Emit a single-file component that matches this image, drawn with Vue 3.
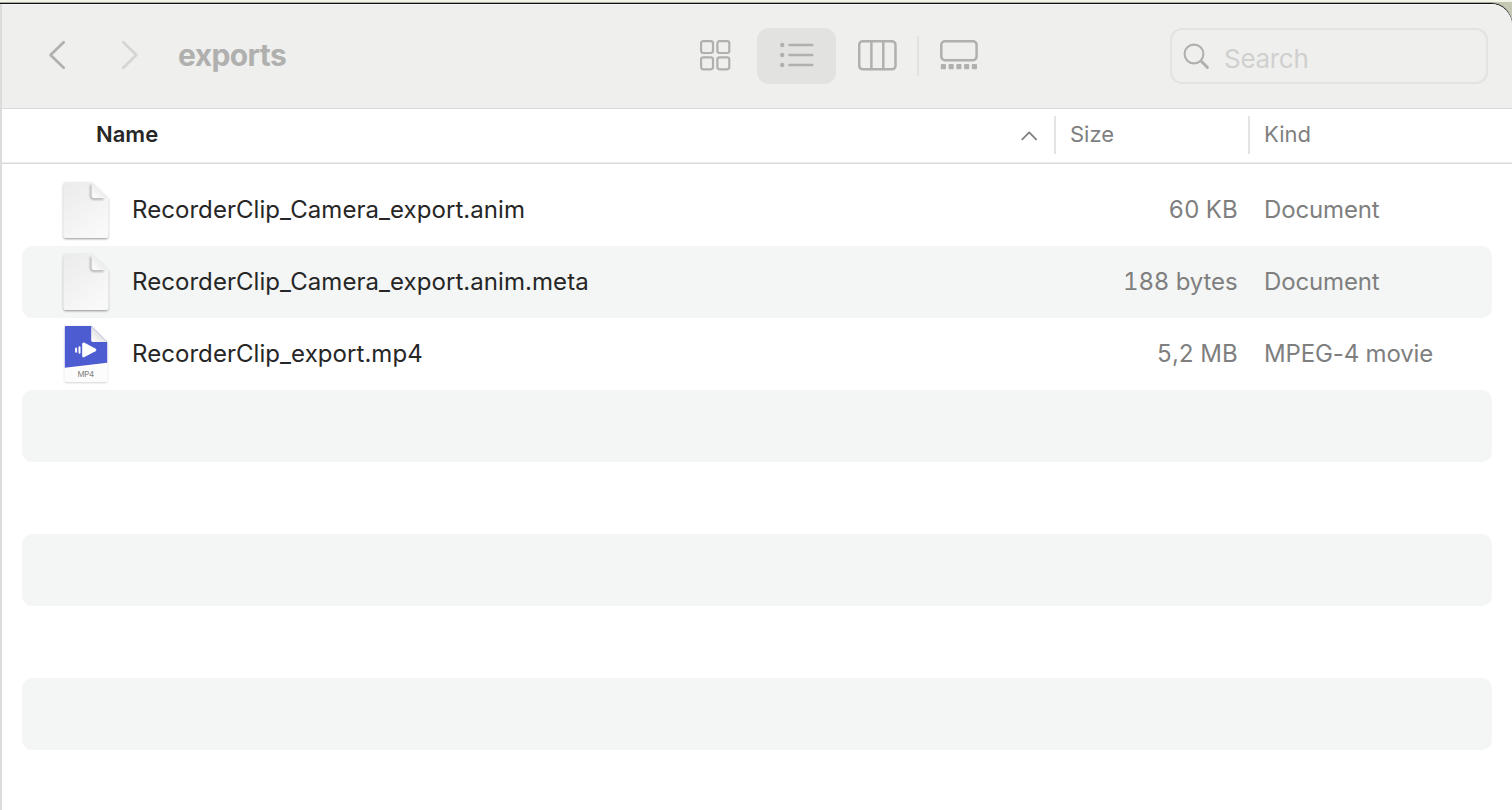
<script setup>
const files = [
  { name: 'RecorderClip_Camera_export.anim', size: '60 KB', kind: 'Document', icon: 'doc' },
  { name: 'RecorderClip_Camera_export.anim.meta', size: '188 bytes', kind: 'Document', icon: 'doc' },
  { name: 'RecorderClip_export.mp4', size: '5,2 MB', kind: 'MPEG-4 movie', icon: 'mp4' },
  ...Array.from({ length: 6 }, () => ({ name: '' })),
]
</script>

<template>
  <div class="desktop">
    <div class="window">
      <header class="toolbar">
        <nav class="nav">
          <svg width="92" height="32" viewBox="0 0 92 32" fill="none" stroke-width="2.7" stroke-linecap="round" stroke-linejoin="round">
            <path d="M17.7 3.3 4.5 16 17.7 28.7" stroke="#b0b0af" />
            <path d="M77.3 3.3 90.3 16 77.3 28.7" stroke="#d5d5d4" />
          </svg>
        </nav>
        <h1 class="title">exports</h1>
        <div class="views">
          <svg class="grid-icon" width="32" height="32" viewBox="0 0 32 32" fill="none" stroke="#b0b0af" stroke-width="2.2">
            <rect x="1.1" y="1.1" width="11.9" height="11.9" rx="2.2" />
            <rect x="17.4" y="1.1" width="11.9" height="11.9" rx="2.2" />
            <rect x="1.1" y="17.4" width="11.9" height="11.9" rx="2.2" />
            <rect x="17.4" y="17.4" width="11.9" height="11.9" rx="2.2" />
          </svg>
          <div class="active">
            <svg width="34" height="26" viewBox="0 0 34 26" stroke="#b0b0af" fill="#b0b0af" stroke-linecap="round">
              <g stroke="none"><circle cx="2.2" cy="3" r="2.2" /><circle cx="2.2" cy="13" r="2.2" /><circle cx="2.2" cy="23" r="2.2" /></g>
              <path d="M9.5 3H32.2M9.5 13H32.2M9.5 23H32.2" stroke-width="2.5" />
            </svg>
          </div>
          <svg class="cols-icon" width="40" height="32" viewBox="0 0 40 32" fill="none" stroke="#b0b0af" stroke-width="2.5">
            <rect x="1.2" y="1.3" width="36.3" height="28" rx="3.6" />
            <path d="M13.4 1.3V29.3M25.3 1.3V29.3" />
          </svg>
          <span class="sep"></span>
          <svg class="gallery-icon" width="38" height="32" viewBox="0 0 38 32" fill="none" stroke="#b0b0af" stroke-width="2.5">
            <rect x="1.3" y="1.3" width="35.3" height="18.9" rx="3.6" />
            <g fill="#b0b0af" stroke="none">
              <rect v-for="i in 5" :key="i" :x="0.8 + (i - 1) * 7.75" y="24" width="5.2" height="5.2" rx="0.9" />
            </g>
          </svg>
        </div>
        <div class="search">
          <svg width="28" height="28" viewBox="0 0 28 28" fill="none" stroke="#b0b0af" stroke-linecap="round">
            <circle cx="11" cy="11" r="9.4" stroke-width="2.1" />
            <path d="M18 18 24.4 24.4" stroke-width="2.9" />
          </svg>
          <span>Search</span>
        </div>
      </header>
      <div class="head">
        <div class="h-name"><span>Name</span>
          <svg width="16" height="10" viewBox="0 0 16 10" fill="none" stroke="#7f7f7f" stroke-width="1.8" stroke-linecap="round" stroke-linejoin="round"><path d="M1.3 8.4 8.2 1.4 15.1 8.4" /></svg>
        </div>
        <div class="h-size">Size</div>
        <div class="h-kind">Kind</div>
      </div>
      <main class="list">
        <div v-for="(f, i) in files" :key="i" class="row" :class="{ alt: i % 2 }">
          <template v-if="f.name">
            <svg v-if="f.icon === 'doc'" class="icon" width="54" height="68" viewBox="0 0 54 68">
              <defs>
                <linearGradient :id="'p' + i" x1="0" y1="0" x2="0.7" y2="1">
                  <stop offset="0" stop-color="#ebebeb" /><stop offset="1" stop-color="#f9f9f9" />
                </linearGradient>
                <linearGradient :id="'f' + i" x1="0" y1="1" x2="0.5" y2="0.5">
                  <stop offset="0" stop-color="#ffffff" /><stop offset="1" stop-color="#ededed" />
                </linearGradient>
                <filter :id="'s' + i" x="-20%" y="-20%" width="140%" height="140%"><feDropShadow dx="0" dy="1" stdDeviation="0.8" flood-color="#000" flood-opacity="0.42" /></filter>
                <filter :id="'b' + i" x="-40%" y="-40%" width="180%" height="180%"><feGaussianBlur stdDeviation="1.1" /></filter>
              </defs>
              <path d="M6 6.3H31.7L48.2 22V59.7Q48.2 62.1 45.8 62.1H6Q3.6 62.1 3.6 59.7V8.7Q3.6 6.3 6 6.3Z" :fill="'url(#p' + i + ')'" :filter="'url(#s' + i + ')'" />
              <path d="M31.2 9V20.4Q31.2 22.6 33.4 22.6H43.5" fill="none" stroke="#969696" stroke-width="1.6" :filter="'url(#b' + i + ')'" />
              <path d="M31.7 6.5 47.9 22H33.9Q31.7 22 31.7 19.8Z" :fill="'url(#f' + i + ')'" />
            </svg>
            <svg v-else class="icon" width="54" height="68" viewBox="0 0 54 68">
              <defs>
                <linearGradient id="mf" x1="0" y1="1" x2="0.5" y2="0.5"><stop offset="0" stop-color="#fff" /><stop offset="1" stop-color="#e3e3e3" /></linearGradient>
                <filter id="ms" x="-20%" y="-20%" width="140%" height="140%"><feDropShadow dx="0" dy="0.6" stdDeviation="0.8" flood-color="#000" flood-opacity="0.22" /></filter>
              </defs>
              <path d="M6.2 6H31.3L47.2 22V60.4Q47.2 62 45.6 62H6.4Q4.8 62 4.8 60.4V7.5Q4.8 6 6.2 6Z" fill="#fcfcfc" filter="url(#ms)" />
              <path d="M5.8 6H31.3L47.2 22V42.7L4.8 47.8V7Q4.8 6 5.8 6Z" fill="#4d5cd1" />
              <path d="M31.2 6 47.2 22H32.9Q31.2 22 31.2 20.3Z" fill="url(#mf)" />
              <path d="M22.2 24.2Q22.2 21.6 24.5 22.8L35.4 28.6Q37.4 29.9 35.4 31.2L24.5 37.1Q22.2 38.2 22.2 35.7Z" fill="#fff" />
              <path d="M19.5 27.3V32.7M16.1 28.4V31.7" stroke="#fff" stroke-width="2" stroke-linecap="round" />
              <text x="25.8" y="57" text-anchor="middle" font-size="8" fill="#808080" textLength="16.5">MP4</text>
            </svg>
            <div class="c-name">{{ f.name }}</div>
            <div class="c-size">{{ f.size }}</div>
            <div class="c-kind">{{ f.kind }}</div>
          </template>
        </div>
      </main>
    </div>
  </div>
</template>

<style>
html, body { margin: 0; overflow: hidden; }
</style>

<style scoped>
* { box-sizing: border-box; }
.desktop { width: 1512px; height: 810px; padding-top: 4px; overflow: hidden; font-family: Inter, "Liberation Sans", sans-serif; background: linear-gradient(#f0f5e6 0 2px, #c5c9b4 2px 100%); }
.window { height: 806px; background: #fff; border-left: 2px solid #dcdcdc; border-top-right-radius: 21px; box-shadow: 0 -1px 0 #111, 0 -2px 0 #a9aba3; overflow: hidden; display: flex; flex-direction: column; }
.toolbar { height: 105px; flex: none; background: #efefee; border-bottom: 1px solid #d9d9d9; border-top: 1px solid #f6f6f6; display: flex; align-items: flex-start; }
.nav { margin: 34px 0 0 44px; width: 132px; height: 32px; }
.title { margin: 31px 0 0; width: 520px; font-size: 30px; line-height: 38px; font-weight: 700; letter-spacing: -0.6px; color: #b0b0af; }
.views { display: flex; width: 280px; margin-top: 23px; }
.grid-icon { margin: 12px 25px 0 2px; }
.active { width: 79px; height: 56px; border-radius: 12px; background: #e2e2e1; display: flex; align-items: center; justify-content: center; padding: 0 0 2px 1px; }
.cols-icon { margin: 12px 19px 0 22px; }
.sep { width: 2px; height: 40px; margin: 8px 21px 0 0; background: #e1e1e0; }
.gallery-icon { margin-top: 12px; }
.search { margin: 23px 24px 0 auto; width: 318px; height: 56px; border: 2px solid #e3e3e2; border-radius: 12px; display: flex; padding: 13px 0 0 11px; color: #d0d0cf; font-size: 26px; line-height: 32px; letter-spacing: -0.3px; }
.search span { margin: 0 0 0 13px; }
.head { height: 55px; flex: none; box-shadow: inset 0 -1px #dadada, inset 0 -2px #ececec; display: flex; padding-left: 94px; font-size: 22px; line-height: 50px; color: #7f7f7f; }
.h-name { width: 958px; color: #262626; font-weight: 600; display: flex; justify-content: space-between; padding-right: 17px; }
.h-name svg { margin-top: 22px; }
.h-size, .h-kind { position: relative; padding-left: 16px; width: 194px; }
.h-size::before, .h-kind::before { content: ""; position: absolute; left: 0; top: 7px; width: 2px; height: 38px; background: #e3e3e3; }
.list { padding: 10px 20px 0; }
.row { height: 72px; border-radius: 10px; display: flex; align-items: center; font-size: 24px; line-height: 29px; color: #7f7f7f; }
.alt { background: #f4f6f5; }
.icon { margin: 0 0 0 38px; flex: none; }
.c-name, .c-size, .c-kind { padding-bottom: 1px; }
.c-name { margin-left: 18px; width: 950px; color: #262626; letter-spacing: 0.06px; }
.c-size { width: 155.5px; text-align: right; font-variant-numeric: tabular-nums; letter-spacing: -0.1px; }
.c-kind { margin-left: 26.5px; white-space: nowrap; letter-spacing: -0.15px; }
</style>
